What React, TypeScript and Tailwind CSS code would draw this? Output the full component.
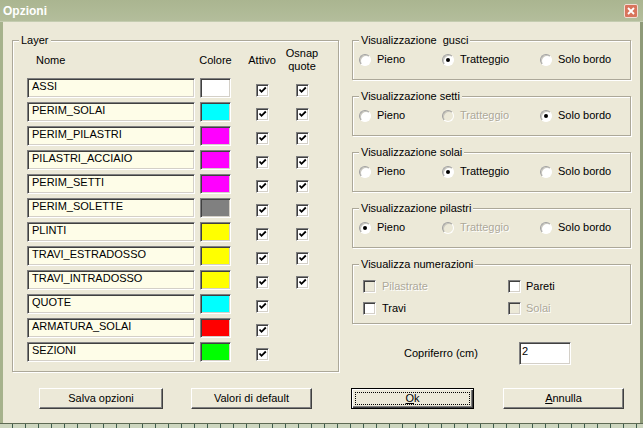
import React from 'react';

interface Layer {
  name: string;
  swatch: string;
  osnap: boolean;
}

const layers: Layer[] = [
  { name: 'ASSI', swatch: 'bg-white', osnap: true },
  { name: 'PERIM_SOLAI', swatch: 'bg-[#00ffff]', osnap: true },
  { name: 'PERIM_PILASTRI', swatch: 'bg-[#ff00ff]', osnap: true },
  { name: 'PILASTRI_ACCIAIO', swatch: 'bg-[#ff00ff]', osnap: true },
  { name: 'PERIM_SETTI', swatch: 'bg-[#ff00ff]', osnap: true },
  { name: 'PERIM_SOLETTE', swatch: 'bg-[#808080]', osnap: true },
  { name: 'PLINTI', swatch: 'bg-[#ffff00]', osnap: true },
  { name: 'TRAVI_ESTRADOSSO', swatch: 'bg-[#ffff00]', osnap: true },
  { name: 'TRAVI_INTRADOSSO', swatch: 'bg-[#ffff00]', osnap: true },
  { name: 'QUOTE', swatch: 'bg-[#00ffff]', osnap: false },
  { name: 'ARMATURA_SOLAI', swatch: 'bg-[#ff0000]', osnap: false },
  { name: 'SEZIONI', swatch: 'bg-[#00ff00]', osnap: false },
];

interface RadioGroupDef {
  title: string;
  selected: number;
  disabled: number[];
}

const radioGroups: RadioGroupDef[] = [
  { title: 'Visualizzazione  gusci', selected: 1, disabled: [] },
  { title: 'Visualizzazione setti', selected: 2, disabled: [1] },
  { title: 'Visualizzazione solai', selected: 1, disabled: [] },
  { title: 'Visualizzazione pilastri', selected: 0, disabled: [1] },
];

const radioLabels = ['Pieno', 'Tratteggio', 'Solo bordo'];
const radioWidths = ['w-[83px]', 'w-[98px]', 'w-[90px]'];

const sunken =
  'border border-t-[#808080] border-l-[#808080] border-b-white border-r-white shadow-[inset_1px_1px_0_#404040,inset_-1px_-1px_0_#d4d0c8]';

const disabledText = 'text-[#aca899] [text-shadow:1px_1px_0_#ffffff]';

const Check: React.FC<{ checked?: boolean; disabled?: boolean }> = ({ checked, disabled }) => (
  <span
    className={`flex h-[13px] w-[13px] shrink-0 items-center justify-center ${sunken} ${disabled ? 'bg-[#ece9d8]' : 'bg-white'}`}
  >
    {checked && (
      <svg width="9" height="9" viewBox="0 0 9 9">
        <path d="M1.5 3.5 L3.5 5.8 L7.8 1.5" fill="none" stroke="#000" strokeWidth="1.8" />
      </svg>
    )}
  </span>
);

const Radio: React.FC<{ checked?: boolean; disabled?: boolean }> = ({ checked, disabled }) => (
  <span
    className={`flex h-[12px] w-[12px] shrink-0 items-center justify-center rounded-full border border-t-[#a0a0a0] border-l-[#a0a0a0] border-b-white border-r-white shadow-[inset_1px_1px_0_#c8c6bc] ${disabled ? 'bg-[#ece9d8]' : 'bg-white'}`}
  >
    {checked && <span className="h-[4px] w-[4px] rounded-full bg-black" />}
  </span>
);

const GroupBox: React.FC<{ title: string; className: string; children?: React.ReactNode }> = ({ title, className, children }) => (
  <div className={`relative border border-[#aca899] shadow-[inset_1px_1px_0_#ffffff,1px_1px_0_#ffffff] ${className}`}>
    <span className="absolute -top-[7px] left-[6px] whitespace-pre bg-[#ece9d8] px-[2px]">{title}</span>
    {children}
  </div>
);

const Button: React.FC<{ className: string; children: React.ReactNode; isDefault?: boolean }> = ({ className, children, isDefault }) =>
  isDefault ? (
    <button className={`flex h-[21px] border border-black bg-[#ece9d8] p-[2px] shadow-[inset_1px_1px_0_#ffffff,inset_-1px_-1px_0_#404040,inset_-2px_-2px_0_#808080] ${className}`}>
      <span className="m-[1px] flex flex-1 items-center justify-center border border-dotted border-black">{children}</span>
    </button>
  ) : (
    <button className={`flex h-[21px] items-center justify-center border border-t-white border-l-white border-b-[#404040] border-r-[#404040] bg-[#ece9d8] shadow-[inset_-1px_-1px_0_#808080] ${className}`}>
      {children}
    </button>
  );

export default function App() {
  return (
    <div className="flex h-[428px] w-[643px] flex-col overflow-hidden bg-[#ece9d8] font-['Liberation_Sans',Arial,sans-serif] text-[11px] leading-[13px] text-black">
      {/* Title bar */}
      <div className="flex h-[22px] shrink-0 items-center justify-between bg-gradient-to-b from-[#aab590] to-[#b4be9c] pl-[3px] pr-[5px] shadow-[inset_0_-1px_0_#c4ccb0]">
        <span className="text-[12px] font-bold text-white">Opzioni</span>
        <span className="flex h-[14px] w-[14px] items-center justify-center rounded-[2px] border border-[#f1ddd3] bg-[#d8745c]">
          <svg width="8" height="8" viewBox="0 0 8 8">
            <path d="M1 1 L7 7 M7 1 L1 7" stroke="#fff" strokeWidth="1.8" />
          </svg>
        </span>
      </div>

      {/* Body */}
      <div className="flex flex-1 flex-col border-l-[3px] border-r-[3px] border-l-[#a6b28c] border-r-[#8e9a78]">
        <div className="flex pt-[18px]">
          {/* Layer group */}
          <GroupBox title="Layer" className="ml-[9px] h-[332px] w-[327px]">
            <div className="pl-[14px] pt-[6px]">
              <div className="flex h-[26px] items-center">
                <span className="w-[168px] pl-[9px]">Nome</span>
                <span className="ml-[5px] flex w-[31px] justify-center whitespace-nowrap">Colore</span>
                <span className="flex w-[62px] justify-center">Attivo</span>
                <span className="flex w-[18px] flex-col items-center whitespace-nowrap">
                  <span>Osnap</span>
                  <span>quote</span>
                </span>
              </div>
              <div className="mt-[5px] flex flex-col gap-[4px]">
                {layers.map(layer => (
                  <div key={layer.name} className="flex h-[20px]">
                    <div className={`h-[20px] w-[168px] bg-[#fefde8] pl-[4px] pt-[1px] ${sunken}`}>{layer.name}</div>
                    <div className={`ml-[5px] h-[20px] w-[31px] ${layer.swatch} ${sunken}`} />
                    <div className="flex w-[62px] justify-center pt-[6px]">
                      <Check checked />
                    </div>
                    <div className="flex w-[18px] justify-center pt-[6px]">{layer.osnap && <Check checked />}</div>
                  </div>
                ))}
              </div>
            </div>
          </GroupBox>

          {/* Right column */}
          <div className="ml-[13px] flex w-[279px] flex-col">
            <div className="flex flex-col gap-[16px]">
              {radioGroups.map(group => (
                <GroupBox key={group.title} title={group.title} className="h-[40px]">
                  <div className="mt-[12px] flex h-[13px] items-center pl-[6px]">
                    {radioLabels.map((label, i) => {
                      const off = group.disabled.includes(i);
                      return (
                        <span key={label} className={`flex items-center gap-[6px] ${radioWidths[i]}`}>
                          <Radio checked={group.selected === i} disabled={off} />
                          <span className={off ? disabledText : ''}>{label}</span>
                        </span>
                      );
                    })}
                  </div>
                </GroupBox>
              ))}
              <GroupBox title="Visualizza numerazioni" className="h-[60px]">
                <div className="mt-[15px] flex flex-col gap-[9px] pl-[10px]">
                  <div className="flex h-[13px] items-center">
                    <span className="flex w-[145px] items-center gap-[6px]">
                      <Check disabled />
                      <span className={disabledText}>Pilastrate</span>
                    </span>
                    <span className="flex items-center gap-[5px]">
                      <Check />
                      <span>Pareti</span>
                    </span>
                  </div>
                  <div className="flex h-[13px] items-center">
                    <span className="flex w-[145px] items-center gap-[6px]">
                      <Check />
                      <span>Travi</span>
                    </span>
                    <span className="flex items-center gap-[5px]">
                      <Check disabled />
                      <span className={disabledText}>Solai</span>
                    </span>
                  </div>
                </div>
              </GroupBox>
            </div>

            <div className="mt-[18px] flex h-[23px] items-center">
              <span className="ml-[52px] w-[115px]">Copriferro (cm)</span>
              <div className={`h-[23px] w-[52px] bg-white pl-[2px] pt-[2px] ${sunken}`}>2</div>
            </div>
          </div>
        </div>

        {/* Buttons */}
        <div className="mt-[16px] flex">
          <Button className="ml-[36px] w-[124px]">Salva opzioni</Button>
          <Button className="ml-[28px] w-[121px]">Valori di default</Button>
          <Button className="ml-[39px] w-[123px]" isDefault>
            <span>
              <span className="underline">O</span>k
            </span>
          </Button>
          <Button className="ml-[29px] w-[121px]">
            <span>
              <span className="underline">A</span>nnulla
            </span>
          </Button>
        </div>
      </div>

      {/* Bottom frame edge */}
      <div className="h-[1px] shrink-0 bg-[#5e6a54]" />
      <div className="h-[4px] shrink-0 bg-[repeating-linear-gradient(90deg,#cdd6bf_0px,#cdd6bf_12px,#3e5c4c_12px,#3e5c4c_13px)]" />
    </div>
  );
}
